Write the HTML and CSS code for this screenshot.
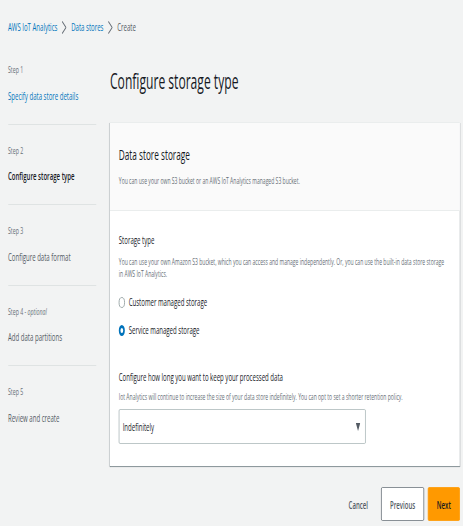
FILE: index.html
```html
<!DOCTYPE html>
<html lang="en">
<head>
<meta charset="utf-8">
<title>Configure storage type</title>
<link rel="stylesheet" href="styles.css">
</head>
<body>
<div class="page">
  <nav class="crumbs">
    <a class="crumb-link">AWS IoT Analytics</a>
    <svg class="chev" viewBox="0 0 9 13"><polyline points="1,0.5 8,6.5 1,12.5" fill="none" stroke="#687078" stroke-width="1.4"/></svg>
    <a class="crumb-link">Data stores</a>
    <svg class="chev" viewBox="0 0 9 13"><polyline points="1,0.5 8,6.5 1,12.5" fill="none" stroke="#687078" stroke-width="1.4"/></svg>
    <span class="crumb-current">Create</span>
  </nav>
  <div class="layout">
    <aside class="steps">
      <div class="step">
        <div class="step-label">Step 1</div>
        <div class="step-title link">Specify data store details</div>
      </div>
      <div class="step">
        <div class="step-label">Step 2</div>
        <div class="step-title active">Configure storage type</div>
      </div>
      <div class="step">
        <div class="step-label">Step 3</div>
        <div class="step-title">Configure data format</div>
      </div>
      <div class="step">
        <div class="step-label">Step 4 - <i>optional</i></div>
        <div class="step-title">Add data partitions</div>
      </div>
      <div class="step">
        <div class="step-label">Step 5</div>
        <div class="step-title">Review and create</div>
      </div>
    </aside>
    <main class="main">
      <h1 class="title">Configure storage type</h1>
      <section class="card">
        <header class="card-head">
          <h2 class="card-title">Data store storage</h2>
          <p class="desc">You can use your own S3 bucket or an AWS IoT Analytics managed S3 bucket.</p>
        </header>
        <div class="card-body">
          <div class="field">
            <div class="label">Storage type</div>
            <p class="desc field-desc"><span class="line">You can use your own Amazon S3 bucket, which you can access and manage independently. Or, you can use the built-in data store storage</span><span class="line">in AWS IoT Analytics.</span></p>
            <div class="radios">
              <div class="radio-row"><span class="radio"></span><span class="radio-label">Customer managed storage</span></div>
              <div class="radio-row"><span class="radio checked"></span><span class="radio-label">Service managed storage</span></div>
            </div>
          </div>
          <div class="field field-2">
            <div class="label">Configure how long you want to keep your processed data</div>
            <p class="desc field-desc2">Iot Analytics will continue to increase the size of your data store indefinitely. You can opt to set a shorter retention policy.</p>
            <div class="select">
              <span>Indefinitely</span>
              <svg class="caret" viewBox="0 0 8 8"><polygon points="0,0 8,0 4,8" fill="#545b64"/></svg>
            </div>
          </div>
        </div>
      </section>
      <div class="actions">
        <button class="btn btn-link">Cancel</button>
        <button class="btn btn-normal">Previous</button>
        <button class="btn btn-primary">Next</button>
      </div>
    </main>
  </div>
</div>
</body>
</html>
```

FILE: styles.css
```css
* {
  box-sizing: border-box;
  margin: 0;
  padding: 0;
}

html,
body {
  background: #f2f3f3;
  overflow: hidden;
}

body {
  font-family: "Open Sans", "Noto Sans", Arial, sans-serif;
  font-weight: 500;
  color: #16191f;
}

.page {
  width: 841px;
  height: 526px;
  padding: 20px 5px 0 14.5px;
  transform: scaleX(0.55);
  transform-origin: 0 0;
}

.crumbs {
  display: flex;
  align-items: center;
  height: 14px;
  font-size: 11px;
  line-height: 14px;
  white-space: nowrap;
}

.crumb-link {
  color: #0073bb;
}

.crumb-current {
  color: #545b64;
}

.chev {
  width: 9px;
  height: 13px;
  margin: 0 8px;
  flex: none;
}

.layout {
  display: flex;
  margin-top: 10px;
}

.steps {
  width: 160px;
  flex: none;
}

.step {
  padding: 20px 0 21px;
  border-top: 1px solid #dfe3e3;
}

.step:first-child {
  border-top: none;
}

.step-label {
  font-size: 9.5px;
  line-height: 12px;
  color: #687078;
  margin-bottom: 12.5px;
}

.step-title {
  font-size: 11px;
  line-height: 14px;
  color: #545b64;
  white-space: nowrap;
}

.step-title.link {
  color: #0073bb;
}

.step-title.active {
  color: #16191f;
  font-weight: 600;
}

.main {
  flex: 1;
  min-width: 0;
  margin-left: 25.5px;
  padding-top: 21.5px;
}

.title {
  font-size: 22px;
  line-height: 28px;
  font-weight: 400;
  color: #16191f;
  white-space: nowrap;
}

.card {
  margin-top: 28.5px;
  background: #fff;
  border-top: 1px solid #eaeded;
  box-shadow: 0 1px 1px 0 rgba(0, 28, 36, 0.3), 1px 1px 1px 0 rgba(0, 28, 36, 0.15), -1px 1px 1px 0 rgba(0, 28, 36, 0.15);
}

.card-head {
  background: #fafafa;
  padding: 21px 16px 23px;
  border-bottom: 1px solid #eaeded;
}

.card-title {
  font-size: 15px;
  line-height: 20px;
  font-weight: 500;
  color: #16191f;
}

.desc {
  font-size: 9.2px;
  line-height: 12px;
  color: #687078;
  white-space: nowrap;
}

.card-head .desc {
  margin-top: 11px;
}

.card-body {
  padding: 22px 16px 22px;
}

.label {
  font-size: 11px;
  line-height: 14px;
  color: #16191f;
  white-space: nowrap;
}

.field-desc {
  margin-top: 9px;
}

.line {
  display: block;
}

.radios {
  margin-top: 14px;
  display: flex;
  flex-direction: column;
  gap: 12px;
}

.radio-row {
  display: flex;
  align-items: center;
  height: 16px;
}

.radio {
  width: 11px;
  height: 11px;
  border-radius: 50%;
  border: 1.5px solid #879596;
  background: #fff;
  flex: none;
}

.radio.checked {
  border: 3.5px solid #0073bb;
}

.radio-label {
  margin-left: 7px;
  font-size: 11px;
  line-height: 16px;
  color: #16191f;
  white-space: nowrap;
}

.field-2 {
  margin-top: 32px;
}

.field-desc2 {
  margin-top: 7px;
}

.select {
  margin-top: 6px;
  width: 449px;
  height: 35px;
  border: 1px solid #aab7b8;
  border-radius: 2px;
  background: #fff;
  display: flex;
  align-items: center;
  justify-content: space-between;
  padding: 0 9px 0 6px;
  font-size: 11px;
  color: #16191f;
}

.caret {
  width: 8px;
  height: 8px;
}

.actions {
  margin-top: 21px;
  display: flex;
  justify-content: flex-end;
  gap: 7px;
}

.btn {
  height: 34px;
  font-family: inherit;
  font-size: 11px;
  font-weight: 600;
  border-radius: 2px;
  cursor: pointer;
}

.btn-link {
  background: transparent;
  border: none;
  color: #545b64;
  padding: 0 17px;
}

.btn-normal {
  width: 78px;
  background: #fff;
  border: 1px solid #687078;
  color: #545b64;
}

.btn-primary {
  width: 58px;
  background: #ff9900;
  border: 1px solid #ff9900;
  color: #16191f;
}
```
